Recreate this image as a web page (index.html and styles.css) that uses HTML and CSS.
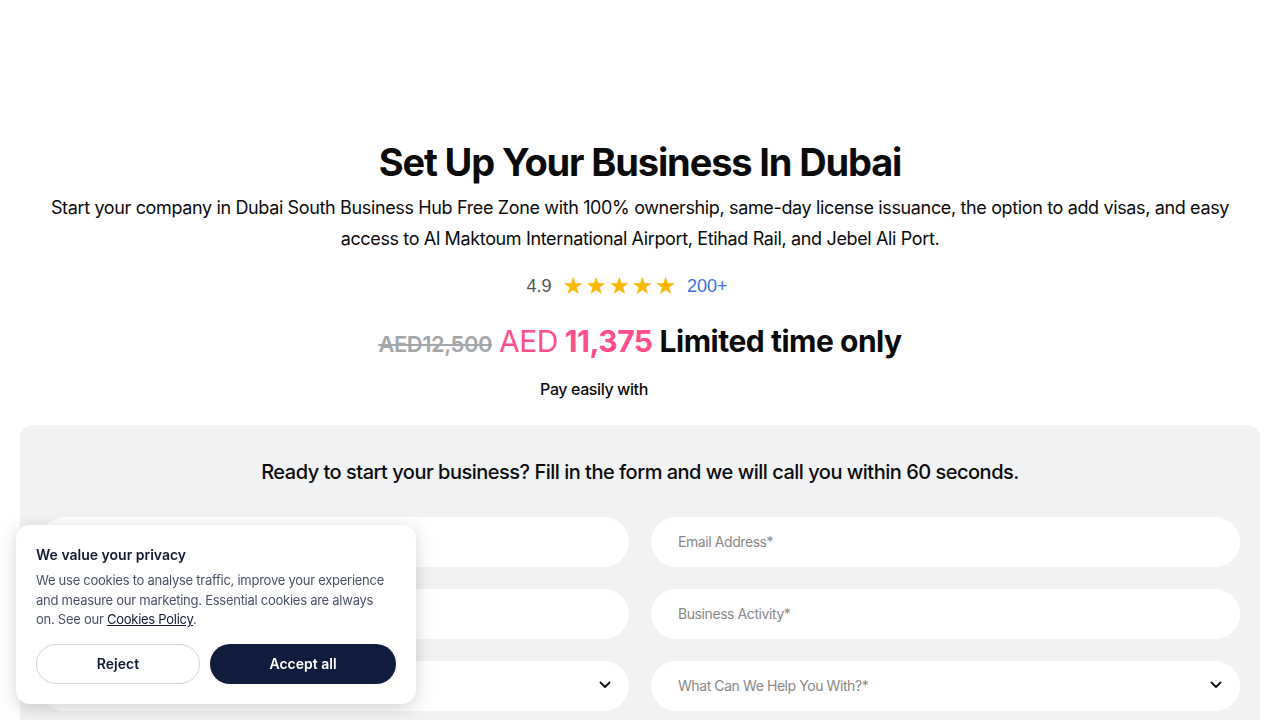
FILE: index.html
```html
<!DOCTYPE html>
<html lang="en">

<head>
    <meta charset="UTF-8">
    <meta name="viewport" content="width=device-width, initial-scale=1.0">
    <title>Set Up Your Business In Dubai</title>
    <link rel="stylesheet" href="styles.css">
</head>

<body>
    <section class="hero">
        <h1>Set Up Your Business In Dubai</h1>
        <p class="lead">Start your company in Dubai South Business Hub Free Zone with 100% ownership, same-day license issuance, the option to add visas, and easy access to Al Maktoum International Airport, Etihad Rail, and Jebel Ali Port.</p>

        <div class="rating">
            <span class="score">4.9</span>
            <span class="stars">★★★★★</span>
            <span class="count">200+</span>
            <span class="review-logo"></span>
        </div>

        <div class="price">
            <span class="old">AED12,500</span>
            <span class="new"><span class="cur">AED</span> 11,375</span>
            <span class="limited">Limited time only</span>
        </div>

        <div class="pay">
            <span>Pay easily with</span>
            <span class="pay-logos"></span>
        </div>
    </section>

    <section class="form-box">
        <h3>Ready to start your business? Fill in the form and we will call you within 60 seconds.</h3>
        <form class="lead-form">
            <input type="text" placeholder="Full Name*">
            <input type="email" placeholder="Email Address*">
            <input type="tel" placeholder="Phone Number*">
            <input type="text" placeholder="Business Activity*">
            <div class="select">
                <span>Number Of Visas*</span>
                <svg width="12" height="8" viewBox="0 0 12 8"><path d="M1.5 1.5 6 6l4.5-4.5" fill="none" stroke="#111" stroke-width="1.8" stroke-linecap="round" stroke-linejoin="round"/></svg>
            </div>
            <div class="select">
                <span>What Can We Help You With?*</span>
                <svg width="12" height="8" viewBox="0 0 12 8"><path d="M1.5 1.5 6 6l4.5-4.5" fill="none" stroke="#111" stroke-width="1.8" stroke-linecap="round" stroke-linejoin="round"/></svg>
            </div>
        </form>
    </section>

    <div class="cookie">
        <h4>We value your privacy</h4>
        <p>We use cookies to analyse traffic, improve your experience and measure our marketing. Essential cookies are always on. See our <a href="#">Cookies Policy</a>.</p>
        <div class="cookie-btns">
            <button class="reject">Reject</button>
            <button class="accept">Accept all</button>
        </div>
    </div>
</body>

</html>
```

FILE: styles.css
```css
body {
    font-family: Inter, "Noto Sans", sans-serif;
    margin: 0;
    background: #ffffff;
    color: #0b0b0b;
}

.hero {
    padding-top: 139px;
    text-align: center;
}

h1 {
    font-size: 38px;
    line-height: 46px;
    font-weight: 700;
    letter-spacing: -0.03em;
    margin: 0;
}

.lead {
    max-width: 1200px;
    margin: 7px auto 0;
    font-size: 18px;
    line-height: 31px;
    letter-spacing: -0.02em;
}

.rating {
    margin-top: 20px;
    display: flex;
    justify-content: center;
    align-items: center;
    height: 24px;
    font-family: "Liberation Sans", Arial, sans-serif;
    font-size: 18px;
}

.score {
    color: #555;
    margin-right: 11px;
}

.stars {
    color: #fbb800;
    font-size: 24px;
    letter-spacing: 1.6px;
    font-family: "DejaVu Sans", sans-serif;
}

.count {
    color: #3b6fe0;
    margin-left: 9px;
}

/* room for the review platform badge */
.review-logo {
    width: 26px;
}

.price {
    margin-top: 25px;
    height: 40px;
    display: flex;
    justify-content: center;
    align-items: baseline;
    gap: 7px;
    letter-spacing: -0.03em;
}

.old {
    color: #a3a6aa;
    font-size: 22px;
    font-weight: 600;
    text-decoration: line-through;
}

.new {
    color: #ff4f8b;
    font-size: 30px;
    font-weight: 700;
}

.cur {
    font-weight: 400;
}

.limited {
    font-size: 30px;
    font-weight: 700;
}

.pay {
    margin: 14px 0 0;
    display: flex;
    justify-content: center;
    align-items: center;
    gap: 12px;
    font-size: 16px;
    line-height: 24px;
    font-weight: 500;
    letter-spacing: -0.025em;
}

/* payment method logos sit here */
.pay-logos {
    width: 80px;
    height: 24px;
}

.form-box {
    margin: 24px 20px 0;
    padding: 33px 20px 40px;
    background: #f1f2f4;
    border-radius: 12px;
}

.form-box h3 {
    margin: 0 0 31px;
    text-align: center;
    font-size: 20px;
    line-height: 28px;
    font-weight: 500;
    letter-spacing: -0.025em;
}

.lead-form {
    display: grid;
    grid-template-columns: 1fr 1fr;
    gap: 22px;
}

.lead-form input,
.select {
    box-sizing: border-box;
    height: 50px;
    border: none;
    border-radius: 25px;
    background: #ffffff;
    padding: 0 27px 2px;
    font-family: inherit;
    font-size: 14px;
    letter-spacing: -0.03em;
    color: #111;
}

.lead-form input::placeholder {
    color: #888;
}

.select {
    display: flex;
    align-items: center;
    justify-content: space-between;
    color: #888;
    padding-right: 18px;
}

.cookie {
    position: fixed;
    left: 16px;
    top: 525px;
    width: 400px;
    box-sizing: border-box;
    padding: 20px;
    background: #ffffff;
    border-radius: 14px;
    box-shadow: rgba(0, 0, 0, 0.18) 0px 4px 18px;
    color: #1a2233;
}

.cookie h4 {
    margin: 0;
    font-size: 14px;
    line-height: 20px;
    font-weight: 600;
    color: #111a33;
}

.cookie p {
    margin: 6px 8px 0 0;
    font-size: 13px;
    line-height: 19.5px;
    letter-spacing: -0.02em;
    color: #4a5268;
}

.cookie a {
    color: #111a33;
}

.cookie-btns {
    display: flex;
    gap: 10px;
    margin-top: 14px;
}

.cookie-btns button {
    height: 40px;
    border-radius: 20px;
    font-family: inherit;
    font-size: 14px;
    font-weight: 600;
}

.reject {
    width: 164px;
    background: #ffffff;
    border: 1px solid #cfd4de;
    color: #111a33;
}

.accept {
    flex: 1;
    background: #101c3d;
    border: none;
    color: #ffffff;
}
```
